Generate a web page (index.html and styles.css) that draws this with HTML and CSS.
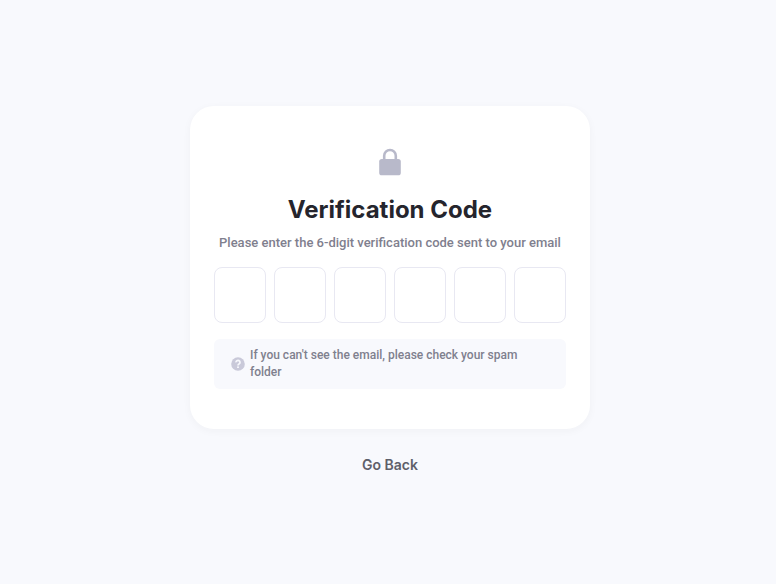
FILE: index.html
```html
<!DOCTYPE html>
<html lang="en">
<head>
    <meta charset="UTF-8">
    <meta name="viewport" content="width=device-width, initial-scale=1.0">
    <title>Verification Code</title>
    <link rel="stylesheet" href="styles.css">
</head>
<body>
    <main class="page">
        <form class="card">
            <svg class="lock-icon" viewBox="0 0 32 32" aria-hidden="true">
                <path d="M10.2 14V9.8a5.8 5.8 0 0 1 11.6 0V14" fill="none" stroke="#b8b9ca" stroke-width="2.6"/>
                <rect x="5.2" y="13" width="21.6" height="16.3" rx="2.6" fill="#b8b9ca"/>
            </svg>
            <h1 class="title">Verification Code</h1>
            <p class="subtitle" id="subtitle">Please enter the 6-digit verification code sent to your email</p>
            <div class="code" role="group" aria-labelledby="subtitle">
                <input class="digit" type="text" inputmode="numeric" maxlength="1" aria-label="Digit 1">
                <input class="digit" type="text" inputmode="numeric" maxlength="1" aria-label="Digit 2">
                <input class="digit" type="text" inputmode="numeric" maxlength="1" aria-label="Digit 3">
                <input class="digit" type="text" inputmode="numeric" maxlength="1" aria-label="Digit 4">
                <input class="digit" type="text" inputmode="numeric" maxlength="1" aria-label="Digit 5">
                <input class="digit" type="text" inputmode="numeric" maxlength="1" aria-label="Digit 6">
            </div>
            <div class="notice">
                <svg class="help-icon" viewBox="0 0 16 16" aria-hidden="true">
                    <circle cx="8" cy="8" r="6.8" fill="#c9c9d9"/>
                    <path d="M6 6.4a2 1.9 0 1 1 3.1 1.5C8.4 8.4 8 8.7 8 9.5" fill="none" stroke="#f7f8fc" stroke-width="1.7"/>
                    <rect x="7.1" y="10.4" width="1.8" height="1.6" fill="#f7f8fc"/>
                </svg>
                <p class="notice-text">If you can't see the email, please check your spam folder</p>
            </div>
        </form>
        <button class="back" type="button">Go Back</button>
    </main>
</body>
</html>
```

FILE: styles.css
```css
* {
    box-sizing: border-box;
}
body {
    margin: 0;
    background-color: #f8f9fd;
    font-family: Inter, "Liberation Sans", sans-serif;
}
.page {
    display: flex;
    flex-direction: column;
    align-items: center;
    justify-content: center;
    gap: 24px;
    min-height: 100vh;
    padding: 0 0 2px 4px;
}
.card {
    display: flex;
    flex-direction: column;
    align-items: center;
    width: 100%;
    max-width: 400px;
    padding: 40px 24px;
    background-color: #fff;
    border-radius: 24px;
    box-shadow: 0 2px 8px rgba(40, 41, 61, 0.04);
}
.lock-icon {
    width: 32px;
    height: 32px;
}
.title {
    margin: 16px 0 8px;
    font-size: 24px;
    line-height: 32px;
    font-weight: 700;
    color: #25252d;
}
.subtitle {
    margin: 0 0 16px;
    font-family: Roboto, "Liberation Sans", sans-serif;
    font-size: 13px;
    line-height: 17px;
    font-weight: 500;
    text-align: center;
    color: #7f808e;
}
.code {
    display: flex;
    gap: 8px;
    width: 100%;
    margin-bottom: 16px;
}
.digit {
    flex: 1;
    min-width: 0;
    height: 56px;
    padding: 0;
    border: 1px solid #e8e8f2;
    border-radius: 8px;
    background-color: #fff;
    font-family: inherit;
    font-size: 24px;
    text-align: center;
    color: #25252d;
}
.notice {
    display: flex;
    align-items: center;
    gap: 4px;
    width: 100%;
    padding: 8px 16px;
    border-radius: 6px;
    background-color: #f8f9fd;
}
.help-icon {
    flex: none;
    width: 16px;
    height: 16px;
}
.notice-text {
    margin: 0;
    font-family: Roboto, "Liberation Sans", sans-serif;
    font-size: 12px;
    line-height: 17px;
    font-weight: 500;
    color: #7f808e;
}
.back {
    padding: 0;
    border: none;
    background: none;
    font-family: inherit;
    font-size: 14px;
    line-height: 23px;
    font-weight: 600;
    color: #5e5f6a;
    cursor: pointer;
}
```
